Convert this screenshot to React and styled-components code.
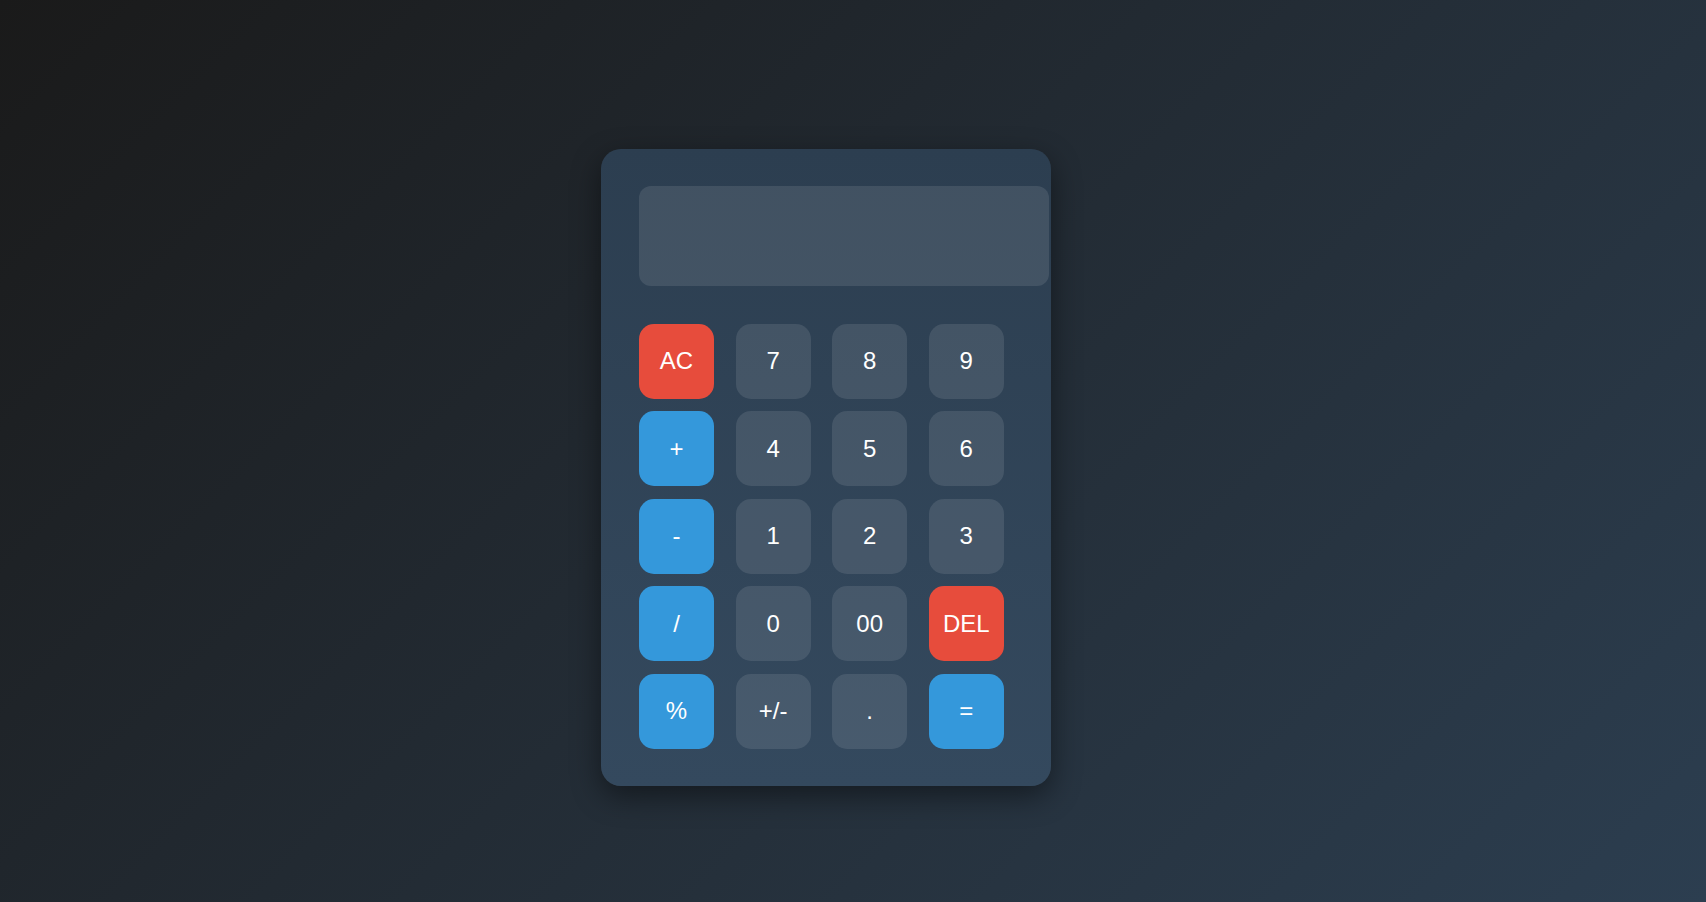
import React, { useState } from "react";
import styled, { createGlobalStyle } from "styled-components";

const GlobalStyle = createGlobalStyle`
  html, body {
    margin: 0;
    padding: 0;
  }
  body {
    font-family: "Liberation Sans", Arial, sans-serif;
    background: linear-gradient(135deg, #1a1a1a 0%, #2c3e50 100%);
    min-height: 100vh;
  }
`;

const Page = styled.div`
  min-height: 100vh;
  display: flex;
  align-items: center;
  justify-content: center;
`;

const Calculator = styled.div`
  width: 450px;
  box-sizing: border-box;
  padding: 37px 38px;
  border-radius: 20px;
  background: linear-gradient(180deg, #2c3e50 0%, #34495e 100%);
  box-shadow: 0 10px 30px rgba(0, 0, 0, 0.45);
  margin: 32px 54px 0 0;
`;

const Display = styled.div`
  width: 410px;
  height: 100px;
  box-sizing: border-box;
  border-radius: 12px;
  background: rgba(255, 255, 255, 0.1);
  color: #fff;
  font-size: 36px;
  display: flex;
  align-items: center;
  justify-content: flex-end;
  padding: 0 20px;
  margin-bottom: 38px;
`;

const Keys = styled.div`
  display: grid;
  grid-template-columns: repeat(4, 75px);
  column-gap: 21.6px;
  row-gap: 12.5px;
`;

const colors = {
  danger: "#e74c3c",
  op: "#3498db",
  num: "rgba(255, 255, 255, 0.1)",
};

const Key = styled.button`
  width: 75px;
  height: 75px;
  border: none;
  border-radius: 15px;
  background: ${(p) => colors[p.$kind] || colors.num};
  color: #fff;
  font-family: "Liberation Sans", Arial, sans-serif;
  font-size: 24px;
  padding: 0;
  cursor: pointer;
  &:hover {
    filter: brightness(1.1);
  }
`;

const layout = [
  ["AC", "danger"], ["7"], ["8"], ["9"],
  ["+", "op"], ["4"], ["5"], ["6"],
  ["-", "op"], ["1"], ["2"], ["3"],
  ["/", "op"], ["0"], ["00"], ["DEL", "danger"],
  ["%", "op"], ["+/-"], ["."], ["=", "op"],
];

const App = () => {
  const [value, setValue] = useState("");

  const press = (k) => {
    if (k === "AC") return setValue("");
    if (k === "DEL") return setValue((v) => v.slice(0, -1));
    if (k === "=") {
      try {
        // eslint-disable-next-line no-new-func
        setValue(String(Function(`return (${value.replace(/%/g, "/100")})`)()));
      } catch (e) {
        setValue("Error");
      }
      return;
    }
    if (k === "+/-") return setValue((v) => (v.startsWith("-") ? v.slice(1) : v ? "-" + v : v));
    setValue((v) => v + k);
  };

  return (
    <Page>
      <GlobalStyle />
      <Calculator>
        <Display>{value}</Display>
        <Keys>
          {layout.map(([label, kind]) => (
            <Key key={label} $kind={kind} onClick={() => press(label)}>
              {label}
            </Key>
          ))}
        </Keys>
      </Calculator>
    </Page>
  );
};

export default App;
